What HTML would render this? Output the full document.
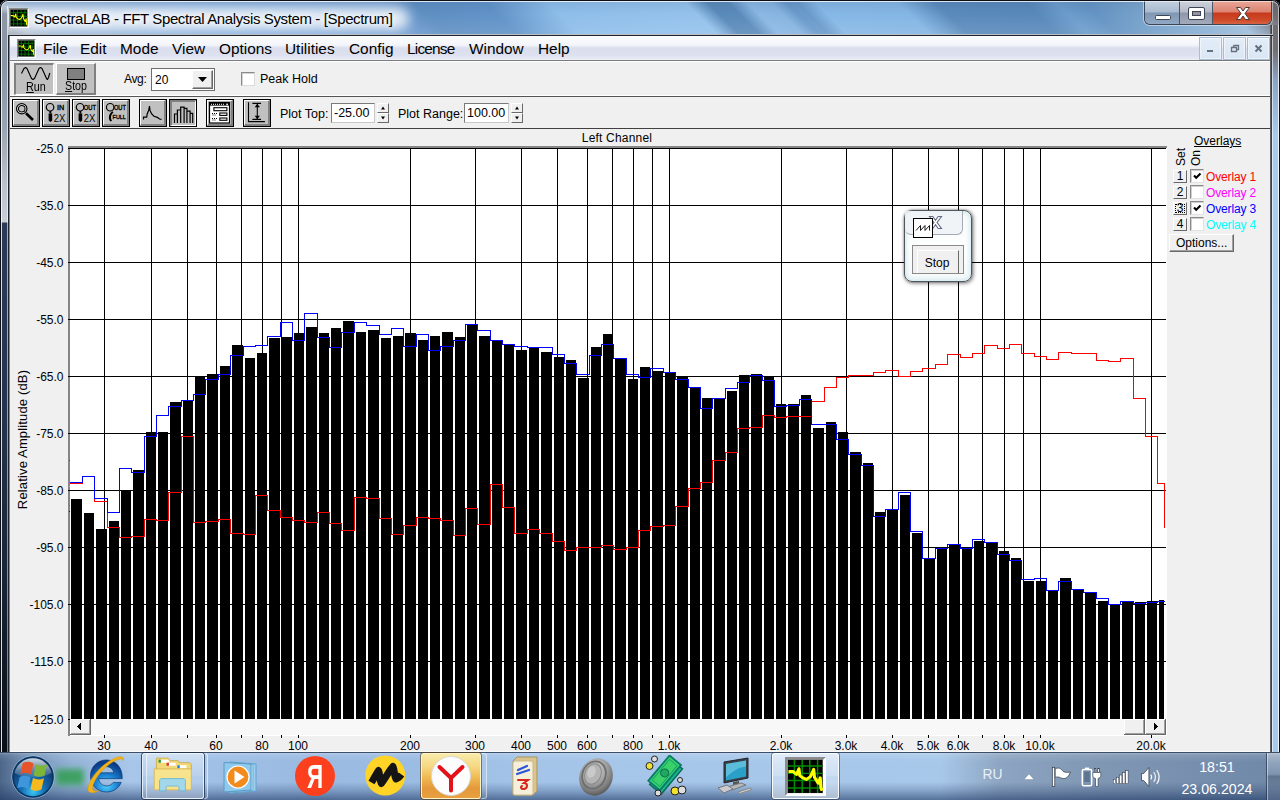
<!DOCTYPE html>
<html lang="en">
<head>
<meta charset="utf-8">
<title>SpectraLAB - FFT Spectral Analysis System - [Spectrum]</title>
<style>
*{box-sizing:border-box;margin:0;padding:0}
html,body{width:1280px;height:800px;overflow:hidden;background:#000}
body{position:relative;font-family:"Liberation Sans",sans-serif;font-size:12px;color:#000}
.abs{position:absolute}
#frame{position:absolute;left:0;top:0;width:1280px;height:752px;background:#7ea6d4;overflow:hidden;border-radius:8px 8px 0 0}
#frameedge{position:absolute;left:0;top:0;width:1280px;height:760px;border-radius:8px 8px 0 0;box-shadow:inset 0 0 0 1px #0c1016,inset 0 0 0 2px rgba(255,255,255,.55);pointer-events:none}
#titleglass{position:absolute;left:0;top:0;width:1280px;height:35px;
 background:linear-gradient(180deg,rgba(20,40,80,.10) 0,rgba(20,40,80,0) 14px,rgba(255,255,255,.10) 34px),linear-gradient(45deg,#8f9db0 12.7px,#a3b3c8 21.2px,#8badd4 41.0px,#7aa6d8 154.1px,#6d9bd0 292.0px,#5f8fc2 316.8px,#6193c8 366.3px,#8ebeea 410.8px,#94c2ec 507.7px,#5a8aba 523.3px,#5a8aba 537.4px,#8ab8e4 551.5px,#86b4e0 567.8px,#6a9acb 578.4px,#6a9acb 586.9px,#86b8e6 599.6px,#84b6e4 657.6px,#5a8abc 684.5px,#5888ba 748.1px,#6c9ccc 769.3px,#6494c4 790.5px,#7aa4cc 825.9px,#9dbddc 886.0px,#7c8594 905.1px,#6e6b71 914.3px)}
#tglow{position:absolute;left:-6px;top:7px;width:415px;height:23px;border-radius:12px;background:rgba(255,255,255,.8);filter:blur(6px)}
#titleglass:before{content:"";position:absolute;left:0;top:0;width:100%;height:1px;background:#1c222b}
#titleglass:after{content:"";position:absolute;left:1px;top:1px;width:1278px;height:1px;background:rgba(255,255,255,.55)}
#lframe{position:absolute;left:0;top:6px;width:8px;height:746px;background:linear-gradient(180deg,rgba(140,150,165,0) 0,#8d97a6 8px,#8a94a3 60px,#9aa3b0 120px,#bcc2cc 180px,#c9cdd6 216px,#2c3b55 217px,#25344e 400px,#1a2638 560px,#0e1620 680px,#0a1018 746px)}
#lframe2{position:absolute;left:8px;top:35px;width:2px;height:717px;background:linear-gradient(90deg,#1d2430 0,#1d2430 1px,#8a8a8a 1px)}
#lframe i{position:absolute;top:0;height:100%;width:1px}
#rframe{position:absolute;left:1270px;top:25px;width:10px;height:727px;background:linear-gradient(180deg,#6f6c72 0,#716f76 25px,#8aa4c6 55px,#a6c9ee 110px,#b0d2f4 400px,#a4c8ee 727px)}
#rframe i{position:absolute;top:0;height:100%;width:1px}
#title{position:absolute;left:34px;top:8.5px;font-size:15px;letter-spacing:-0.38px;line-height:20px;white-space:nowrap;color:#000;text-shadow:0 0 5px #fff,0 0 9px #fff}
#client{position:absolute;left:10px;top:35px;width:1260px;height:717px;background:#f0f0f0;border-bottom:1px solid #fcfcfc}
#topline{position:absolute;left:8px;top:34px;width:1265px;height:2px;background:#1f2630;border-top:1px solid rgba(255,255,255,.7);z-index:3}
#menubar{position:absolute;left:0;top:0;width:1260px;height:26px;background:linear-gradient(180deg,#fdfdfe 0,#f3f5fa 10px,#e4e7f2 12px,#dadeed 13px,#dde1ef 20px,#e8ebf5 24px,#f4f5fa 25px);border-bottom:1px solid #7b7b7b}
#menubar span{position:absolute;top:3px;font-size:15.4px;line-height:22px;white-space:nowrap}
.tbline{position:absolute;left:0;width:1260px;height:1px;background:#555}
.lbl{position:absolute;white-space:nowrap;font-size:12px;line-height:14px}
.btn3{position:absolute;background:#c0c0c0;border:1px solid #000}
.btn3:before{content:"";position:absolute;left:0;top:0;right:0;bottom:0;border-top:1px solid #fff;border-left:1px solid #fff;border-right:2px solid #808080;border-bottom:2px solid #808080}
.btn3.down:before{border-top:2px solid #808080;border-left:2px solid #808080;border-right:1px solid #fff;border-bottom:1px solid #fff}
.btn3 svg{position:absolute;left:0;top:0}
.edit{position:absolute;background:#fff;border:1px solid #7a7a7a;border-right-color:#c8c8c8;border-bottom-color:#c8c8c8;font-size:13px;line-height:17px;padding-left:2px;white-space:nowrap}
.spin{position:absolute;width:11px;height:10px;background:#f0f0f0;border:1px solid #fff;border-right-color:#696969;border-bottom-color:#696969}
#taskbar{position:absolute;left:0;top:752px;width:1280px;height:48px;overflow:hidden;
 background:linear-gradient(180deg,rgba(255,255,255,.28) 1px,rgba(255,255,255,.10) 3px,rgba(255,255,255,0) 10px,rgba(25,50,95,0) 30px,rgba(25,50,95,.22) 38px,rgba(25,50,95,.58) 48px),
 linear-gradient(90deg,#4c6688 0,#6f8cb0 25px,#93b2d6 70px,#a7c6e9 130px,#a1c1e7 200px,#9abae1 300px,#9bbce3 420px,#a3c3e8 520px,#a7c7ea 700px,#a8c8ea 940px,#8da5c2 1000px,#8097b4 1100px,#6f88a8 1280px)}
#taskbar:before{content:"";position:absolute;left:0;top:0;width:100%;height:1px;background:#3d4f68}
.tbi{position:absolute;top:1px;height:46px;border-radius:3px}
.tray{position:absolute;color:#fff;white-space:nowrap;font-size:15px}
</style>
</head>
<body>

<svg width="0" height="0" style="position:absolute">
<defs>
 <g id="appicon">
  <rect x="0" y="0" width="20" height="20" fill="#fff"/><path d="M0 0h20l-1.600 1.500h-17v17l-1.400 1.500z" fill="#8c8c8c"/>
  <rect x="1.400" y="1.500" width="17" height="17" fill="#000"/>
  <path d="M1.400 4.600h17M1.400 8.400h17M1.400 12.100h17M1.400 15.900h17M4.600 1.500v17M8.400 1.500v17M12.100 1.500v17M15.900 1.500v17" stroke="#008a00" stroke-width=".75" fill="none"/>
  <path d="M1.700 7.400h2.200l1.700 1.600 1.200-3 .4 3.500 1.500 1.200 1.800.8 1.900-1.400 1.600-3.800.4 4.100 1.800 3.100 1-2.800.3 5 .6 1.600" stroke="#ffff00" fill="none" stroke-linejoin="round"/>
 </g>
 <g id="mag"><circle cx="9" cy="10" r="5.500" fill="#fff" stroke="#000" stroke-width="1.100"/><circle cx="9" cy="10" r="3.800" fill="#c0c0c0" stroke="#000" stroke-width="1"/></g>
 <g id="magh"><circle cx="7.050" cy="7.250" r="3.750" fill="#c0c0c0" stroke="#000" stroke-width="1.200"/><path d="M6.400 11h1.900v2.600h-1.900z" fill="#000"/><path d="M5.600 13.400h3.600v7l-1.800 1.700-1.800-1.700z" fill="#000"/></g>
 <g id="magh2"><circle cx="7.200" cy="7.250" r="3.750" fill="#c0c0c0" stroke="#000" stroke-width="1.200"/><path d="M9.500 11.200c-2.500 1.500-3.600 3.500-3.600 6.200 0 1.800.6 3.200 1.600 4.200l1.500-.9c-.7-.9-1-2-1-3.300 0-2 .8-3.800 2.500-5z" fill="#000"/></g>
</defs>
</svg>

<div id="frame">
<div id="titleglass"><div id="tglow"></div></div>
<div id="lframe"><i style="left:0;background:#000"></i><i style="left:1px;background:linear-gradient(180deg,rgba(255,255,255,.6) 0,rgba(255,255,255,.7) 100%)"></i><i style="left:7px;background:linear-gradient(180deg,rgba(255,255,255,.65) 0,rgba(255,255,255,.6) 29%,rgba(255,255,255,.45) 100%)"></i></div><div id="lframe2"></div>
<div id="rframe"><i style="left:0;background:#5d6166"></i><i style="left:1px;background:#39414d"></i><i style="left:2px;background:rgba(255,255,255,.6)"></i><i style="left:8px;background:rgba(255,255,255,.6)"></i><i style="left:9px;background:#0c1016"></i></div>
<div id="topline"></div>
<svg class="abs" style="left:9px;top:8px;stroke-width:1.05" width="20" height="20" viewBox="0 0 20 20"><use href="#appicon"/></svg>
<div id="title">SpectraLAB - FFT Spectral Analysis System - [Spectrum]</div>
<!-- caption buttons -->
<div class="abs" style="left:1144px;top:1px;width:128px;height:24px;border:1px solid #3b4656;border-top:none;border-radius:0 0 6px 6px;overflow:hidden;box-shadow:0 0 0 1px rgba(255,255,255,.45)">
 <div class="abs" style="left:0;top:0;width:35px;height:23px;background:linear-gradient(180deg,#c3d0df 0,#a9bbd0 11px,#7f97b3 12px,#93aac5 24px);border-right:1px solid #4a5668"></div>
 <div class="abs" style="left:35px;top:0;width:33px;height:23px;background:linear-gradient(180deg,#cfd3dc 0,#b4b9c6 11px,#8f97a8 12px,#a5adbc 24px);border-right:1px solid #4a5668"></div>
 <div class="abs" style="left:68px;top:0;width:60px;height:23px;background:linear-gradient(180deg,#e9a798 0,#dc8270 11px,#c6391c 12px,#cf4a28 19px,#d86a4a 24px)"></div>
 <svg class="abs" style="left:0;top:0" width="128" height="24" viewBox="0 0 128 24">
  <rect x="10.5" y="14.5" width="15" height="4" rx="1" fill="#fff" stroke="#3c4558" stroke-width="1"/>
  <rect x="43.500" y="6.500" width="16" height="12" rx="1.500" fill="#fff" stroke="#3c4558"/><rect x="47.500" y="10.500" width="8" height="4" fill="#9a8f9c" stroke="#3c4558"/>
  <path d="M91.500 6.500h4l2.500 3.500 2.500-3.500h4l-4.500 6 4.500 6h-4l-2.500-3.500-2.500 3.500h-4l4.500-6z" fill="#fff" stroke="#4a3a3a" stroke-width="1" stroke-linejoin="round"/>
 </svg>
</div>
<div id="client">

<div id="menubar">
 <svg class="abs" style="left:7px;top:4px;stroke-width:1.05" width="19" height="19" viewBox="0 0 20 20"><use href="#appicon"/></svg>
 <span style="left:33px">File</span><span style="left:70px">Edit</span><span style="left:110px">Mode</span><span style="left:162px">View</span><span style="left:209px">Options</span><span style="left:275px">Utilities</span><span style="left:339px">Config</span><span style="left:397px;letter-spacing:-0.8px">License</span><span style="left:459px">Window</span><span style="left:528px">Help</span>
 <div class="abs mdi" style="left:1189px"></div><div class="abs mdi" style="left:1213px"></div><div class="abs mdi" style="left:1237px"></div>
 <svg class="abs" style="left:1189px;top:2px" width="71" height="22" viewBox="0 0 71 22">
  <rect x="8" y="13" width="6" height="2" fill="#66707e"/>
  <path d="M34.500 8.500h5v4h-2m-3-2v-2M32.500 10.500h5v4h-5z" fill="none" stroke="#66707e" stroke-width="1.300"/>
  <path d="M56.500 8.500l6 6m0-6l-6 6" stroke="#66707e" stroke-width="2" fill="none"/>
 </svg>
</div>
<style>.mdi{top:2px;width:23px;height:23px;background:linear-gradient(180deg,#e3edf8,#d9e6f4);border:1px solid #a9bdd3;box-shadow:inset 0 0 0 1px rgba(255,255,255,.5)}</style>

<!-- toolbar row 1: page y 61..95 ; client offset (10,35) -->
<div class="abs" style="left:0;top:26px;width:1260px;height:1px;background:#fff"></div>
<div class="abs" style="left:4px;top:28px;width:40px;height:32px;background:#c0c0c0;border:2px solid #808080;border-right:1px solid #fff;border-bottom:1px solid #fff" id="runbtn">
 <svg class="abs" style="left:-2px;top:-2px" width="40" height="32" viewBox="14 63 40 32"><path d="M21.500 73.500 L24 68.500 L25.500 67.500 L27 68.500 L31.500 78.500 L33 79.500 L34.500 78.500 L39 68.500 L40.500 67.500 L42 68.500 L46.500 78.500 L47.500 79.500 L48.500 77.500 L49.800 73" fill="none" stroke="#000" stroke-width="1.150" stroke-linejoin="round"/></svg>
 <span class="lbl" style="left:9.500px;top:15px;font-size:12px;transform:scaleX(.9);transform-origin:0 0"><u>R</u>un</span>
</div>
<div class="abs" style="left:46px;top:28px;width:40px;height:32px;background:#c0c0c0;border:1px solid #fff;border-right:2px solid #808080;border-bottom:2px solid #808080" id="stopbtn">
 <div class="abs" style="left:10px;top:4px;width:18px;height:12px;background:#808080;border:1px solid #000"></div>
 <span class="lbl" style="left:7.500px;top:15px;font-size:12px;transform:scaleX(.89);transform-origin:0 0"><u>S</u>top</span>
</div>
<span class="lbl" style="left:114px;top:37px;letter-spacing:-0.35px">Avg:</span>
<div class="abs" style="left:141px;top:33px;width:64px;height:23px;background:#fff;border:1px solid #6e6e6e">
 <span class="lbl" style="left:3px;top:4px;font-size:12px;line-height:14px">20</span>
 <div class="abs" style="left:40px;top:1px;width:21px;height:19px;background:#f0f0f0;border:1px solid #fff;border-right-color:#696969;border-bottom-color:#696969;box-shadow:inset -1px -1px 0 #a0a0a0"><svg class="abs" style="left:5px;top:6px" width="9" height="5"><path d="M0 0h9l-4.500 5z" fill="#000"/></svg></div>
</div>
<div class="abs" style="left:231px;top:37px;width:14px;height:14px;background:#fff;border:1px solid #8a8a8a;border-right-color:#dcdcdc;border-bottom-color:#dcdcdc;box-shadow:inset 1px 1px 0 #d4d4d4"></div>
<span class="lbl" style="left:250px;top:37px;font-size:12.500px">Peak Hold</span>
<div class="tbline" style="top:60px;background:#fff"></div>
<div class="tbline" style="top:61px"></div>
<!-- toolbar row 2: page y 99..127 ; svg origin inside each button = button left+1, 100 -->
<div class="btn3" style="left:2px;top:64px;width:28px;height:28px"><svg width="26" height="26" viewBox="0 0 26 26"><circle cx="8.750" cy="8.750" r="5.200" fill="#fff" stroke="#000" stroke-width="1.200"/><circle cx="8.750" cy="8.750" r="3.300" fill="#c0c0c0" stroke="#000" stroke-width="1.100"/><path d="M13 13.200l7 6.800" stroke="#000" stroke-width="2.600" fill="none"/></svg></div>
<div class="btn3" style="left:32px;top:64px;width:28px;height:28px"><svg width="26" height="26" viewBox="0 0 26 26"><use href="#magh"/><text x="13.900" y="9.600" font-size="6.500" font-weight="normal" stroke="#000" stroke-width=".35" font-family="'Liberation Sans',sans-serif" textLength="7.200" lengthAdjust="spacingAndGlyphs">IN</text><text x="10.700" y="21.500" font-size="11" font-family="'Liberation Sans',sans-serif" textLength="11.600" lengthAdjust="spacingAndGlyphs">2X</text></svg></div>
<div class="btn3" style="left:62px;top:64px;width:28px;height:28px"><svg width="26" height="26" viewBox="0 0 26 26"><use href="#magh"/><text x="10.700" y="9.700" font-size="6.500" font-weight="normal" stroke="#000" stroke-width=".35" font-family="'Liberation Sans',sans-serif" textLength="12.300" lengthAdjust="spacingAndGlyphs">OUT</text><text x="10.700" y="21.500" font-size="11" font-family="'Liberation Sans',sans-serif" textLength="11.600" lengthAdjust="spacingAndGlyphs">2X</text></svg></div>
<div class="btn3" style="left:92px;top:64px;width:28px;height:28px"><svg width="26" height="26" viewBox="0 0 26 26"><use href="#magh2"/><text x="10.900" y="9.700" font-size="6.500" font-weight="normal" stroke="#000" stroke-width=".35" font-family="'Liberation Sans',sans-serif" textLength="12" lengthAdjust="spacingAndGlyphs">OUT</text><text x="9.600" y="18.600" font-size="6" font-weight="normal" stroke="#000" stroke-width=".35" font-family="'Liberation Sans',sans-serif" textLength="13.300" lengthAdjust="spacingAndGlyphs">FULL</text></svg></div>
<div class="btn3" style="left:129px;top:64px;width:28px;height:28px"><svg width="26" height="26" viewBox="0 0 26 26"><path d="M3.500 19.600v-2.500h3.200l.5-3.100 1.400-3.400.9-4.500.5 4.500 1.700 3.400 2.300 2.200 3.400 1.200 2.200 1.600 2 .4" fill="none" stroke="#000" stroke-width="1.200"/></svg></div>
<div class="btn3 down" style="left:159px;top:64px;width:28px;height:28px"><svg width="26" height="26" viewBox="0 0 26 26"><path d="M4.500 23v-9h2.900v9m0-9v-4h3.300v13m0-13v-2.800h3.400v15.800m0-14.600h2.800v14.600m0-11.800h3.200v11.800m0-9.600h2.600v9.600" fill="none" stroke="#000" stroke-width="1.200"/></svg></div>
<div class="btn3" style="left:196px;top:64px;width:28px;height:28px"><svg width="26" height="26" viewBox="0 0 26 26"><rect x="2.500" y="2.500" width="20" height="20.500" fill="#fff" stroke="#000" stroke-width="1.200"/><rect x="3" y="3" width="19" height="2.600" fill="#000"/><path d="M4 4.300h14" stroke="#fff" stroke-width="1" stroke-dasharray="1 1"/><rect x="19.300" y="3.600" width="1.600" height="1.500" fill="#fff"/><rect x="6.900" y="7.700" width="13" height="3" fill="#fff" stroke="#000" stroke-width="1.100"/><rect x="12.800" y="13" width="7.100" height="2.400" fill="#fff" stroke="#000" stroke-width="1.100"/><rect x="12.800" y="18" width="7.100" height="2.300" fill="#fff" stroke="#000" stroke-width="1.100"/><path d="M5 13.500h5M5.500 15h4M5 18.500h5M5.500 20h4" stroke="#000" stroke-dasharray="1 1"/></svg></div>
<div class="btn3" style="left:233px;top:64px;width:28px;height:28px"><svg width="26" height="26" viewBox="0 0 26 26"><path d="M4.500 2.200v19.400h16.400" fill="none" stroke="#000" stroke-width="1.100"/><path d="M8.400 3.400h8.600M8.400 19.400h8.600M13.300 4v15" stroke="#000" stroke-width="1.100" fill="none"/><path d="M13.300 3.900l-2.700 3.300h5.400zM13.300 19l-2.700-3.300h5.400z" fill="#000"/></svg></div>
<span class="lbl" style="left:270px;top:72px;font-size:12.500px">Plot Top:</span>
<div class="edit" style="left:321px;top:68px;width:44px;height:20px;font-size:12.500px;line-height:18px">-25.00</div>
<div class="spin" style="left:367px;top:68px;width:12px"></div><div class="spin" style="left:367px;top:78px;width:12px"></div>
<span class="lbl" style="left:388px;top:72px;font-size:12.500px">Plot Range:</span>
<div class="edit" style="left:454px;top:68px;width:45px;height:20px;font-size:12.500px;line-height:18px">100.00</div>
<div class="spin" style="left:501px;top:68px;width:12px"></div><div class="spin" style="left:501px;top:78px;width:12px"></div>
<svg class="abs" style="left:367px;top:68px" width="150" height="20"><path d="M4 6.500l2-3 2 3zM4 13.500l2 3 2-3zM138 6.500l2-3 2 3zM138 13.500l2 3 2-3z" fill="#000"/></svg>
<div class="tbline" style="top:93px;background:#404040"></div>

<div class="abs" style="left:-10px;top:-35px;width:1280px;height:800px;pointer-events:none"><svg class="plot" style="position:absolute;left:0;top:130px" width="1280" height="622" viewBox="0 130 1280 622" font-family="'Liberation Sans', sans-serif" font-size="12">
<g shape-rendering="crispEdges">
<rect x="68" y="146" width="1099" height="590" fill="#fff"/>
<rect x="68" y="146" width="1099" height="2" fill="#868686"/>
<rect x="68" y="146" width="2" height="590" fill="#868686"/>
<rect x="68" y="148" width="1098" height="1" fill="#000"/>
<rect x="68" y="205" width="1098" height="1" fill="#000"/>
<rect x="68" y="262" width="1098" height="1" fill="#000"/>
<rect x="68" y="319" width="1098" height="1" fill="#000"/>
<rect x="68" y="376" width="1098" height="1" fill="#000"/>
<rect x="68" y="433" width="1098" height="1" fill="#000"/>
<rect x="68" y="490" width="1098" height="1" fill="#000"/>
<rect x="68" y="547" width="1098" height="1" fill="#000"/>
<rect x="68" y="604" width="1098" height="1" fill="#000"/>
<rect x="68" y="661" width="1098" height="1" fill="#000"/>
<rect x="68" y="719" width="1098" height="1" fill="#000"/>
<rect x="104" y="148" width="1" height="571" fill="#000"/>
<rect x="151" y="148" width="1" height="571" fill="#000"/>
<rect x="187" y="148" width="1" height="571" fill="#000"/>
<rect x="216" y="148" width="1" height="571" fill="#000"/>
<rect x="241" y="148" width="1" height="571" fill="#000"/>
<rect x="262" y="148" width="1" height="571" fill="#000"/>
<rect x="281" y="148" width="1" height="571" fill="#000"/>
<rect x="298" y="148" width="1" height="571" fill="#000"/>
<rect x="410" y="148" width="1" height="571" fill="#000"/>
<rect x="475" y="148" width="1" height="571" fill="#000"/>
<rect x="521" y="148" width="1" height="571" fill="#000"/>
<rect x="557" y="148" width="1" height="571" fill="#000"/>
<rect x="587" y="148" width="1" height="571" fill="#000"/>
<rect x="612" y="148" width="1" height="571" fill="#000"/>
<rect x="633" y="148" width="1" height="571" fill="#000"/>
<rect x="652" y="148" width="1" height="571" fill="#000"/>
<rect x="669" y="148" width="1" height="571" fill="#000"/>
<rect x="781" y="148" width="1" height="571" fill="#000"/>
<rect x="846" y="148" width="1" height="571" fill="#000"/>
<rect x="892" y="148" width="1" height="571" fill="#000"/>
<rect x="928" y="148" width="1" height="571" fill="#000"/>
<rect x="958" y="148" width="1" height="571" fill="#000"/>
<rect x="982" y="148" width="1" height="571" fill="#000"/>
<rect x="1004" y="148" width="1" height="571" fill="#000"/>
<rect x="1023" y="148" width="1" height="571" fill="#000"/>
<rect x="1040" y="148" width="1" height="571" fill="#000"/>
<rect x="1151" y="148" width="1" height="571" fill="#000"/>
<path d="M71 499H82V719H71ZM84 513H94V719H84ZM96 529H107V719H96ZM109 521H119V719H109ZM121 490H131V719H121ZM133 470H144V719H133ZM146 432H156V719H146ZM158 432H168V719H158ZM170 402H181V719H170ZM183 400H193V719H183ZM195 376H205V719H195ZM207 374H218V719H207ZM220 366H230V719H220ZM232 345H243V719H232ZM245 358H255V719H245ZM257 353H267V719H257ZM269 338H280V719H269ZM282 337H292V719H282ZM294 333H304V719H294ZM306 327H317V719H306ZM319 333H329V719H319ZM331 328H341V719H331ZM343 321H354V719H343ZM356 332H366V719H356ZM368 330H379V719H368ZM381 338H391V719H381ZM393 336H403V719H393ZM405 333H416V719H405ZM418 340H428V719H418ZM430 336H440V719H430ZM442 332H453V719H442ZM455 337H465V719H455ZM467 324H477V719H467ZM479 336H490V719H479ZM492 341H502V719H492ZM504 345H514V719H504ZM516 350H527V719H516ZM529 348H539V719H529ZM541 352H552V719H541ZM554 357H564V719H554ZM566 360H576V719H566ZM578 378H589V719H578ZM591 347H601V719H591ZM603 334H613V719H603ZM615 359H626V719H615ZM628 379H638V719H628ZM640 367H650V719H640ZM652 371H663V719H652ZM665 373H675V719H665ZM677 376H688V719H677ZM690 387H700V719H690ZM702 398H712V719H702ZM714 399H725V719H714ZM727 391H737V719H727ZM739 375H749V719H739ZM751 374H762V719H751ZM764 376H774V719H764ZM776 404H786V719H776ZM788 404H799V719H788ZM801 395H811V719H801ZM813 428H824V719H813ZM826 422H836V719H826ZM838 432H848V719H838ZM850 452H861V719H850ZM863 463H873V719H863ZM875 512H885V719H875ZM887 510H898V719H887ZM900 495H910V719H900ZM912 533H922V719H912ZM924 559H935V719H924ZM937 548H947V719H937ZM949 544H960V719H949ZM962 549H972V719H962ZM974 541H984V719H974ZM986 543H997V719H986ZM999 551H1009V719H999ZM1011 558H1021V719H1011ZM1023 581H1034V719H1023ZM1036 581H1046V719H1036ZM1048 591H1058V719H1048ZM1060 578H1071V719H1060ZM1073 590H1083V719H1073ZM1085 593H1096V719H1085ZM1098 601H1108V719H1098ZM1110 605H1120V719H1110ZM1122 602H1133V719H1122ZM1135 602H1145V719H1135ZM1147 601H1157V719H1147ZM1159 600H1164V719H1159Z" fill="#000"/>
<path d="M69.5 483.5H82.5V476.5H94.5V501.5H107.5V527.5H119.5V537.5H131.5V536.5H144.5V519.5H156.5V520.5H168.5V492.5H181.5V436.5H193.5V522.5H205.5V521.5H218.5V519.5H230.5V533.5H243.5V534.5H255.5V495.5H267.5V510.5H280.5V517.5H292.5V520.5H304.5V522.5H317.5V512.5H329.5V523.5H341.5V530.5H354.5V497.5H366.5V498.5H379.5V518.5H391.5V534.5H403.5V525.5H416.5V517.5H428.5V518.5H440.5V520.5H453.5V535.5H465.5V508.5H477.5V524.5H490.5V484.5H502.5V507.5H514.5V533.5H527.5V529.5H539.5V533.5H552.5V541.5H564.5V550.5H576.5V547.5H589.5V547.5H601.5V545.5H613.5V549.5H626.5V547.5H638.5V530.5H650.5V526.5H663.5V525.5H675.5V506.5H688.5V488.5H700.5V482.5H712.5V460.5H725.5V452.5H737.5V428.5H749.5V427.5H762.5V415.5H774.5V417.5H786.5V416.5H799.5V416.5H811.5V401.5H824.5V387.5H836.5V377.5H848.5V375.5H861.5V375.5H873.5V372.5H885.5V370.5H898.5V376.5H910.5V371.5H922.5V368.5H935.5V364.5H947.5V354.5H960.5V357.5H972.5V353.5H984.5V345.5H997.5V348.5H1009.5V344.5H1021.5V353.5H1034.5V356.5H1046.5V359.5H1058.5V352.5H1071.5V353.5H1083.5V353.5H1096.5V360.5H1108.5V361.5H1120.5V358.5H1133.5V398.5H1145.5V436.5H1157.5V483.5H1164.5V527.5" fill="none" stroke="#ff0000" stroke-width="1"/>
<path d="M69.5 482.5H82.5V476.5H94.5V498.5H107.5V512.5H119.5V468.5H131.5V472.5H144.5V436.5H156.5V415.5H168.5V406.5H181.5V400.5H193.5V394.5H205.5V379.5H218.5V374.5H230.5V355.5H243.5V346.5H255.5V345.5H267.5V336.5H280.5V322.5H292.5V340.5H304.5V313.5H317.5V337.5H329.5V347.5H341.5V332.5H354.5V322.5H366.5V325.5H379.5V334.5H391.5V328.5H403.5V346.5H416.5V334.5H428.5V350.5H440.5V346.5H453.5V340.5H465.5V324.5H477.5V330.5H490.5V340.5H502.5V344.5H514.5V346.5H527.5V347.5H539.5V347.5H552.5V354.5H564.5V363.5H576.5V374.5H589.5V355.5H601.5V344.5H613.5V358.5H626.5V374.5H638.5V377.5H650.5V368.5H663.5V372.5H675.5V379.5H688.5V387.5H700.5V408.5H712.5V398.5H725.5V388.5H737.5V382.5H749.5V375.5H762.5V380.5H774.5V406.5H786.5V405.5H799.5V399.5H811.5V424.5H824.5V424.5H836.5V439.5H848.5V454.5H861.5V465.5H873.5V516.5H885.5V509.5H898.5V492.5H910.5V531.5H922.5V558.5H935.5V548.5H947.5V544.5H960.5V548.5H972.5V539.5H984.5V542.5H997.5V554.5H1009.5V560.5H1021.5V579.5H1034.5V578.5H1046.5V590.5H1058.5V581.5H1071.5V589.5H1083.5V592.5H1096.5V598.5H1108.5V604.5H1120.5V601.5H1133.5V603.5H1145.5V602.5H1157.5V601.5H1164.5" fill="none" stroke="#0000ff" stroke-width="1"/>
<rect x="69" y="460" width="1" height="1" fill="#f00"/><rect x="69" y="486" width="1" height="1" fill="#0ff"/><rect x="69" y="505" width="1" height="1" fill="#f0f"/><rect x="69" y="511" width="1" height="1" fill="#00f"/>
<rect x="70" y="719" width="1096" height="16" fill="#f8f8f8"/>
<rect x="70" y="719" width="21" height="16" fill="#f0f0f0"/><rect x="70" y="719" width="21" height="1" fill="#fff"/><rect x="70" y="719" width="1" height="16" fill="#fff"/><rect x="70" y="734" width="21" height="1" fill="#696969"/><rect x="90" y="719" width="1" height="16" fill="#696969"/><rect x="71" y="733" width="19" height="1" fill="#a0a0a0"/><rect x="89" y="720" width="1" height="14" fill="#a0a0a0"/>
<rect x="1124" y="719" width="21" height="16" fill="#f0f0f0"/><rect x="1124" y="719" width="21" height="1" fill="#fff"/><rect x="1124" y="719" width="1" height="16" fill="#fff"/><rect x="1124" y="734" width="21" height="1" fill="#696969"/><rect x="1144" y="719" width="1" height="16" fill="#696969"/><rect x="1125" y="733" width="19" height="1" fill="#a0a0a0"/><rect x="1143" y="720" width="1" height="14" fill="#a0a0a0"/>
<rect x="1145" y="719" width="21" height="16" fill="#f0f0f0"/><rect x="1145" y="719" width="21" height="1" fill="#fff"/><rect x="1145" y="719" width="1" height="16" fill="#fff"/><rect x="1145" y="734" width="21" height="1" fill="#696969"/><rect x="1165" y="719" width="1" height="16" fill="#696969"/><rect x="1146" y="733" width="19" height="1" fill="#a0a0a0"/><rect x="1164" y="720" width="1" height="14" fill="#a0a0a0"/>
<path d="M81 723v7l-4-3.500z M1154 723v7l4-3.500z" fill="#000"/>
<rect x="104" y="735" width="1" height="3" fill="#000"/>
<rect x="151" y="735" width="1" height="3" fill="#000"/>
<rect x="187" y="735" width="1" height="3" fill="#000"/>
<rect x="216" y="735" width="1" height="3" fill="#000"/>
<rect x="241" y="735" width="1" height="3" fill="#000"/>
<rect x="262" y="735" width="1" height="3" fill="#000"/>
<rect x="281" y="735" width="1" height="3" fill="#000"/>
<rect x="298" y="735" width="1" height="3" fill="#000"/>
<rect x="410" y="735" width="1" height="3" fill="#000"/>
<rect x="475" y="735" width="1" height="3" fill="#000"/>
<rect x="521" y="735" width="1" height="3" fill="#000"/>
<rect x="557" y="735" width="1" height="3" fill="#000"/>
<rect x="587" y="735" width="1" height="3" fill="#000"/>
<rect x="612" y="735" width="1" height="3" fill="#000"/>
<rect x="633" y="735" width="1" height="3" fill="#000"/>
<rect x="652" y="735" width="1" height="3" fill="#000"/>
<rect x="669" y="735" width="1" height="3" fill="#000"/>
<rect x="781" y="735" width="1" height="3" fill="#000"/>
<rect x="846" y="735" width="1" height="3" fill="#000"/>
<rect x="892" y="735" width="1" height="3" fill="#000"/>
<rect x="928" y="735" width="1" height="3" fill="#000"/>
<rect x="958" y="735" width="1" height="3" fill="#000"/>
<rect x="982" y="735" width="1" height="3" fill="#000"/>
<rect x="1004" y="735" width="1" height="3" fill="#000"/>
<rect x="1023" y="735" width="1" height="3" fill="#000"/>
<rect x="1040" y="735" width="1" height="3" fill="#000"/>
<rect x="1151" y="735" width="1" height="3" fill="#000"/>
</g>
<text x="104" y="750" text-anchor="middle">30</text>
<text x="151" y="750" text-anchor="middle">40</text>
<text x="216" y="750" text-anchor="middle">60</text>
<text x="262" y="750" text-anchor="middle">80</text>
<text x="298" y="750" text-anchor="middle">100</text>
<text x="410" y="750" text-anchor="middle">200</text>
<text x="475" y="750" text-anchor="middle">300</text>
<text x="521" y="750" text-anchor="middle">400</text>
<text x="557" y="750" text-anchor="middle">500</text>
<text x="587" y="750" text-anchor="middle">600</text>
<text x="633" y="750" text-anchor="middle">800</text>
<text x="669" y="750" text-anchor="middle">1.0k</text>
<text x="781" y="750" text-anchor="middle">2.0k</text>
<text x="846" y="750" text-anchor="middle">3.0k</text>
<text x="892" y="750" text-anchor="middle">4.0k</text>
<text x="928" y="750" text-anchor="middle">5.0k</text>
<text x="958" y="750" text-anchor="middle">6.0k</text>
<text x="1004" y="750" text-anchor="middle">8.0k</text>
<text x="1040" y="750" text-anchor="middle">10.0k</text>
<text x="1151" y="750" text-anchor="middle">20.0k</text>
<text x="63.5" y="153" text-anchor="end">-25.0</text>
<text x="63.5" y="210" text-anchor="end">-35.0</text>
<text x="63.5" y="267" text-anchor="end">-45.0</text>
<text x="63.5" y="324" text-anchor="end">-55.0</text>
<text x="63.5" y="381" text-anchor="end">-65.0</text>
<text x="63.5" y="438" text-anchor="end">-75.0</text>
<text x="63.5" y="495" text-anchor="end">-85.0</text>
<text x="63.5" y="552" text-anchor="end">-95.0</text>
<text x="63.5" y="609" text-anchor="end">-105.0</text>
<text x="63.5" y="666" text-anchor="end">-115.0</text>
<text x="63.5" y="724" text-anchor="end">-125.0</text>
<text x="617" y="141.5" text-anchor="middle" letter-spacing=".2">Left Channel</text>
<text transform="translate(27 439.5) rotate(-90)" text-anchor="middle" font-size="13" letter-spacing=".15">Relative Amplitude (dB)</text>
</svg></div>
<!-- overlays panel (page coords minus (10,35)) -->
<span class="lbl" style="left:1184px;top:99px;text-decoration:underline">Overlays</span>
<span class="lbl" style="left:1164px;top:131px;transform-origin:0 0;transform:rotate(-90deg);font-size:12px;width:20px">Set</span>
<span class="lbl" style="left:1179px;top:131px;transform-origin:0 0;transform:rotate(-90deg);font-size:12px;width:20px">On</span>
<style>
.ob{position:absolute;left:1163px;width:14px;height:13px;background:#f0f0f0;border:1px solid #fff;border-right-color:#696969;border-bottom-color:#696969;font-size:12px;line-height:11px;text-align:center}
.oc{position:absolute;left:1180px;width:14px;height:14px;background:#fff;border:1px solid #8a8a8a;border-right-color:#e3e3e3;border-bottom-color:#e3e3e3;box-shadow:inset 1px 1px 0 #cfcfcf}
.ol{position:absolute;left:1196px;letter-spacing:-0.15px;font-size:12px;line-height:14px;white-space:nowrap}
</style>
<div class="ob" style="top:135px">1</div><div class="oc" style="top:134px"><svg width="12" height="12"><path d="M3 5.500l2.200 2.300 4.300-4.300" stroke="#000" stroke-width="2.100" fill="none"/></svg></div><span class="ol" style="top:135px;color:#f00">Overlay 1</span>
<div class="ob" style="top:151px">2</div><div class="oc" style="top:150px"></div><span class="ol" style="top:151px;color:#f0f">Overlay 2</span>
<div class="ob" style="top:167px;outline:1px dotted #000;outline-offset:-3px">3</div><div class="oc" style="top:166px"><svg width="12" height="12"><path d="M3 5.500l2.200 2.300 4.300-4.300" stroke="#000" stroke-width="2.100" fill="none"/></svg></div><span class="ol" style="top:167px;color:#00f">Overlay 3</span>
<div class="ob" style="top:183px">4</div><div class="oc" style="top:182px"></div><span class="ol" style="top:183px;color:#0ff">Overlay 4</span>
<div class="abs" style="left:1159px;top:199px;width:65px;height:18px;background:#f0f0f0;border:1px solid #fff;border-right-color:#696969;border-bottom-color:#696969;box-shadow:inset -1px -1px 0 #a0a0a0;font-size:12px;line-height:16px;padding-left:6px">Options...</div>

<!-- floating mini window: page (904.5..971.5, 210..281.5) -->
<div class="abs" style="left:894px;top:175px;width:68px;height:72px;border-radius:8px;background:linear-gradient(180deg,#f7f9fa,#fdfefe 50%,#f6f9fa);border:1px solid #52565a;box-shadow:1px 1px 4px rgba(0,0,0,.55),0 0 2px rgba(0,0,0,.4), inset 0 0 4px 1px rgba(185,225,236,.75)">
 <div class="abs" style="left:0;top:0;width:58px;height:24px;border:1px solid #a3abb4;border-top:none;border-left:none;border-radius:0 0 6px 6px;background:rgba(238,242,246,.85)"></div>
 <svg class="abs" style="left:22px;top:4px" width="18" height="16"><path d="M2.500 1.500h3.300l2.700 3.800 2.700-3.800h3.300l-4.400 6 4.400 6h-3.300l-2.700-3.800-2.700 3.800h-3.300l4.400-6z" fill="#fff" stroke="#626a86" stroke-width="1.100"/></svg>
 <div class="abs" style="left:8px;top:7px;width:20px;height:20px;background:#fff;border:1px solid #000"><svg width="18" height="18"><path d="M2 11.500l4.500-5v5l4.500-5v5l4.500-5v5" stroke="#000" stroke-width=".9" fill="none"/></svg></div>
 <div class="abs" style="left:7px;top:34px;width:52px;height:29px;border:1px solid #8a8a8a;background:#f0f0f0"></div>
 <div class="abs" style="left:12px;top:39px;width:42px;height:23px;background:#f0f0f0;border-top:1px solid #fff;border-left:1px solid #fff;border-right:1px solid #696969;font-size:12px;line-height:24px;text-align:center;padding-right:2px">Stop</div>
</div>
</div><!-- /client -->
<div id="frameedge"></div>
</div><!-- /frame -->

<div id="taskbar">
 <!-- green blurred thing -->
 <div class="abs" style="left:56px;top:17px;width:28px;height:16px;background:#2f9e4d;filter:blur(3px);opacity:.85"></div>
 <!-- start orb -->
 <svg class="abs" style="left:10px;top:2px" width="46" height="46" viewBox="0 0 46 46">
  <defs><radialGradient id="orb" cx="50%" cy="85%" r="75%"><stop offset="0" stop-color="#39c5f5"/><stop offset=".35" stop-color="#1672b5"/><stop offset=".8" stop-color="#0f3f77"/><stop offset="1" stop-color="#27527f"/></radialGradient>
  <linearGradient id="orbhi" x1="0" y1="0" x2="0" y2="1"><stop offset="0" stop-color="#fff" stop-opacity=".75"/><stop offset="1" stop-color="#fff" stop-opacity=".1"/></linearGradient></defs>
  <circle cx="23" cy="23" r="21" fill="url(#orb)" stroke="#cfe3f5" stroke-width="1" stroke-opacity=".7"/>
  <circle cx="23" cy="23" r="20" fill="none" stroke="#0b3463" stroke-width="1.500"/>
  <path d="M4.500 19a19 19 0 0 1 37 0c-10 6-27 6-37 0z" fill="url(#orbhi)"/>
  <g transform="translate(23.300 22.300) scale(1.200) translate(-22.300 -21.500)"><path d="M13.500 10.500c3-1.500 6-1.500 9 .3l-2 9.200c-3-1.700-6-1.800-9-.3z" fill="#e8542a"/>
  <path d="M24.500 11.500c3 1.600 6 1.600 9.300 0l-2.100 9.300c-3.200 1.500-6.200 1.400-9.200-.2z" fill="#7fb539"/>
  <path d="M11 22c3-1.500 6-1.400 9 .3l-2.100 9.400c-3-1.700-6-1.800-9-.3z" fill="#3f96dc"/>
  <path d="M22 23c3 1.600 6 1.700 9.200.1l-2.100 9.400c-3.200 1.600-6.200 1.500-9.200-.2z" fill="#f6b91e"/></g>
 </svg>
 <!-- IE -->
 <svg class="abs" style="left:83px;top:2px" width="47" height="45" viewBox="0 0 44 42">
  <defs><radialGradient id="ieg" cx="50%" cy="80%" r="70%"><stop offset="0" stop-color="#4fd0ff"/><stop offset=".5" stop-color="#1a7fd0"/><stop offset="1" stop-color="#0b3d86"/></radialGradient></defs>
  <path d="M22 5.500c-8.500 0-15 6.500-15 15s6.500 15 15 15c6.300 0 11.500-3.400 13.800-9h-7.500c-1.200 2-3.400 3.300-6.200 3.300-4 0-7-2.700-7.400-6.800h22c.6-9.800-5.800-17.500-14.700-17.500zm-7.100 12c.7-3.400 3.400-5.700 7-5.700s6.300 2.200 6.900 5.700z" fill="url(#ieg)" stroke="#0a3270" stroke-width=".6"/>
  <path d="M37.500 6c1.500-3.200-1.500-4.800-7.500-2.300C20 8 9 19 5.500 28.500c-3 8 2 9.500 9.500 5.500-5 1.500-7.500.2-5.500-5.500C12.500 20 22 10 30.500 6c4.500-2 7.500-2 7 0z" fill="#f4b21a" stroke="#d99a10" stroke-width=".5"/>
 </svg>
 <!-- explorer button -->
 <div class="tbi" style="left:146px;width:62px;border:1px solid rgba(255,255,255,.55);background:rgba(255,255,255,.12)"></div>
 <div class="tbi" style="left:142px;width:62px;border:1px solid rgba(235,245,255,.85);background:linear-gradient(180deg,rgba(255,255,255,.38),rgba(255,255,255,.16) 50%,rgba(255,255,255,.06) 52%,rgba(255,255,255,.22));box-shadow:0 0 0 1px rgba(30,45,70,.8)"></div>
 <svg class="abs" style="left:151px;top:2px" width="43" height="41" viewBox="0 0 40 40" preserveAspectRatio="none">
  <path d="M5 4h11l2 2.500h7l2 2h9l1.500 1.500v6H5z" fill="#f3d877" stroke="#c9a848" stroke-width=".8"/>
  <path d="M8.500 5.500h8v3h-8zM15 8.500h8v3h-8zM24 11h9v3h-9z" fill="#fff"/><rect x="7" y="5.500" width="2.200" height="3" fill="#2a9a3a"/><rect x="14.500" y="8.500" width="2.200" height="3" fill="#d33"/><rect x="24.500" y="11" width="2.200" height="3" fill="#27c"/>
  <path d="M3 14.500h34.500v19.500l-1 1H4l-1-1z" fill="#f7e28e" stroke="#d6b453" stroke-width=".8"/>
  <path d="M8 26c0-1 .8-2 2-2h20c1.200 0 2 1 2 2v10H26v-3.500c0-.8-.5-1.200-1.200-1.200h-9.600c-.7 0-1.200.4-1.200 1.200V36H8z" fill="#9fd8f0" stroke="#5fb0d8" stroke-width=".8" opacity=".95"/>
 </svg>
 <!-- WMP -->
 <svg class="abs" style="left:222px;top:8px" width="38" height="34" viewBox="0 0 38 34">
  <path d="M8 2l26 2v27l-26 2z" fill="#9fd0ee" stroke="#5fa3cf"/><path d="M5 3l26 1.500v26L5 32z" fill="#b9e0f6" stroke="#6db0d9"/><path d="M2 2.500l27 1.500v26l-27 2z" fill="#8fc9ec" stroke="#5a9cc8"/>
  <circle cx="16" cy="17" r="11" fill="#f28a1c" stroke="#fff" stroke-width="1.200"/><path d="M12.500 10.500l10 6.500-10 6.500z" fill="#fff"/>
 </svg>
 <!-- Ya -->
 <div class="abs" style="left:295px;top:3.500px;width:40px;height:40px;border-radius:50%;background:#fc3f1d;overflow:hidden"><span class="abs" style="left:0;top:0;width:40px;height:40px;color:#fff;font:bold 34px/41px 'Liberation Sans',sans-serif;text-align:center;transform:scaleX(.66)">Я</span></div>
 <!-- market -->
 <svg class="abs" style="left:365px;top:3px" width="41" height="41" viewBox="0 0 41 41"><circle cx="20.300" cy="20.500" r="20" fill="#ffd426"/><path d="M6.500 27.500c2.500-4 4.500-8.500 7-12 1.500 3.500 1 9.500 2.800 13 4-5 7.500-12.500 11.700-17 1.800 3.500 1 9.500 3 12.500 2.200-.5 4-2.500 5.500-4.500" fill="none" stroke="#141414" stroke-width="7" stroke-linejoin="round" stroke-linecap="butt"/></svg>
 <!-- yandex browser button -->
 <div class="tbi" style="left:426px;width:61px;border:1px solid rgba(255,255,255,.5);background:rgba(255,255,255,.1)"></div>
 <div class="tbi" style="left:421px;width:60px;border:1px solid #fff3c8;background:linear-gradient(180deg,#f9eba8 0,#f6d680 30%,#efb850 55%,#e4983a 78%,#e8a040 100%);box-shadow:0 0 0 1px rgba(90,60,20,.6)"></div>
 <svg class="abs" style="left:431px;top:4px" width="40" height="40" viewBox="0 0 40 40"><circle cx="20" cy="20" r="19.500" fill="#fdfdfd" stroke="#d8d8d8"/><path d="M8.500 11l11.500 11 11.500-11M20 21.500v13" stroke="#e3121a" stroke-width="4" fill="none" stroke-linecap="round"/></svg>
 <!-- mahjong -->
 <svg class="abs" style="left:509px;top:3px" width="32" height="42" viewBox="0 0 32 42"><path d="M4 6l4-4h20v34l-4 4H4z" fill="#d9c48f" stroke="#a99562"/><rect x="4" y="6" width="20" height="34" rx="2" fill="#f6efd9" stroke="#c9b98a"/><path d="M9 15l9-4M8 19l12-4" stroke="#2a56d8" stroke-width="2.200" stroke-linecap="round"/><path d="M9 25h10l-4 3c4 0 4 5 0 6-3 .5-4-2-2-3" stroke="#d8261c" stroke-width="2" fill="none" stroke-linecap="round"/></svg>
 <!-- grey disk -->
 <svg class="abs" style="left:575px;top:3px" width="42" height="42" viewBox="0 0 42 42"><defs><radialGradient id="dsk" cx="38%" cy="35%" r="70%"><stop offset="0" stop-color="#d6d6d6"/><stop offset=".45" stop-color="#a9a9a9"/><stop offset=".8" stop-color="#7b7b7b"/><stop offset="1" stop-color="#555"/></radialGradient></defs><ellipse cx="21" cy="22" rx="16.500" ry="19" fill="url(#dsk)" transform="rotate(22 21 22)"/><ellipse cx="19" cy="20" rx="11.500" ry="14" fill="none" stroke="#6e6e6e" stroke-width="1.800" transform="rotate(22 19 20)"/><ellipse cx="18" cy="19" rx="8" ry="10.500" fill="#b4b4b4" stroke="#8a8a8a" transform="rotate(22 18 19)"/><ellipse cx="16.500" cy="17" rx="4" ry="6" fill="#c9c9c9" transform="rotate(22 16.500 17)"/></svg>
 <!-- money -->
 <svg class="abs" style="left:645px;top:3px" width="42" height="42" viewBox="0 0 42 42"><g transform="rotate(-50 21 21)"><rect x="4" y="14" width="33" height="15" fill="#18b98a" stroke="#0a6a5a" stroke-width="1.500"/><rect x="6" y="10.500" width="33" height="15" fill="#3ad16a" stroke="#0a7a6a" stroke-width="1.800"/><rect x="9" y="13" width="27" height="10" fill="none" stroke="#16a86a" stroke-width="1"/><circle cx="22.500" cy="18" r="4" fill="#20a860" stroke="#0b6b52"/></g><g fill="#f1e32c" stroke="#222" stroke-width="1"><circle cx="4.500" cy="11" r="3.500"/><circle cx="9.500" cy="4" r="3" fill="#ddd"/><circle cx="30" cy="36" r="4"/><circle cx="37" cy="35" r="4" fill="#ddd"/><circle cx="13" cy="38" r="3" fill="#ddd"/><circle cx="35" cy="25" r="2.500" fill="#ddd"/></g></svg>
 <!-- computer -->
 <svg class="abs" style="left:716px;top:5px" width="40" height="38" viewBox="0 0 40 38"><path d="M8 5l24-4v20l-24 5z" fill="#3a3f47" stroke="#22262c"/><path d="M10 7l20-3.500v16l-20 4z" fill="#2aa0c8"/><path d="M10 7l20-3.500v6c-8 1-14 5-20 11z" fill="#7fd0e8" opacity=".6"/><path d="M17 25l6-1v4l-6 1z" fill="#555"/><path d="M11 30l14-4 5 2-14 5z" fill="#b5b8bd" stroke="#777"/><path d="M2 31l9-3 6 4-9 4z" fill="#c9cbd0" stroke="#777"/><path d="M22 35l12-4 2 1.500-12 4z" fill="#cfd1d6" stroke="#888"/></svg>
 <!-- active spectralab button -->
 <div class="tbi" style="left:772px;width:67px;border:1px solid rgba(255,255,255,.9);background:linear-gradient(180deg,rgba(255,255,255,.62),rgba(255,255,255,.42) 50%,rgba(255,255,255,.28) 52%,rgba(255,255,255,.5));box-shadow:0 0 0 1px rgba(40,60,90,.55)"></div>
 <svg class="abs" style="left:785px;top:5px;stroke-width:1.5" width="41" height="39" viewBox="0 0 20 20" preserveAspectRatio="none"><use href="#appicon"/></svg>
 <!-- tray -->
 <span class="tray" style="left:982.500px;top:14px;font-size:13.800px;line-height:18px;color:#e9eff6">RU</span>
 <svg class="abs" style="left:1020px;top:10px" width="150" height="32" viewBox="0 0 150 32">
  <path d="M4 17.500h10l-5-5.500z" fill="#fff" stroke="rgba(0,0,0,.3)" stroke-width=".5"/>
  <g fill="#fff" stroke="#2a3340" stroke-width=".7"><rect x="32.300" y="5.300" width="2.500" height="19"/><path d="M35.200 6.800c3.500-1.500 5.500-.5 7 1.500 1 1.800 3.500 2.500 8.200 1.800-1 2.800-2.500 5.200-4.800 6.200-2.500.8-4.500-.2-6.200-1-1.500-.6-3-.4-4.200.2z"/></g>
  <g fill="none" stroke="#fff" stroke-width="1.500"><rect x="62.300" y="7.500" width="9.400" height="16.200" rx="1.500"/><path d="M65 6.300h4"/></g><rect x="64.200" y="9.500" width="5.600" height="10.500" fill="#5d7590"/>
  <g fill="#fff" stroke="#2a3340" stroke-width=".6"><rect x="74.300" y="6.600" width="1.500" height="4"/><rect x="77.800" y="6.600" width="1.500" height="4"/><path d="M72.800 10.400h8v3.200c0 1.500-1.200 2.600-2.700 2.800v8h-2.600v-8c-1.500-.2-2.700-1.300-2.700-2.800z"/></g>
  <g fill="#fff" stroke="#2a3340" stroke-width=".5"><rect x="93.300" y="17.300" width="2.400" height="4.400"/><rect x="96.400" y="15.200" width="2.400" height="6.500"/><rect x="99.500" y="13" width="2.400" height="8.700"/><rect x="102.600" y="10.700" width="2.400" height="11"/><rect x="105.700" y="8.700" width="2.400" height="13"/></g>
  <g fill="#fff" stroke="#2a3340" stroke-width=".7"><path d="M121.500 11.500h2.200l5.200-6v19l-5.200-6h-2.200z"/></g><g fill="none" stroke="#fff" stroke-linecap="round"><path d="M131 13c.8 1.200.8 2.800 0 4" stroke-width="1.300"/><path d="M134 10.500c1.800 2.800 1.800 6.200 0 9" stroke-width="1.300" stroke-opacity=".8"/><path d="M137 8.500c2.600 4 2.600 9 0 13" stroke-width="1.300" stroke-opacity=".9"/></g>
 </svg>
 <span class="tray" style="left:1182px;top:5.500px;width:70px;text-align:center;font-size:14.200px;line-height:18px">18:51</span>
 <span class="tray" style="left:1172px;top:27.500px;width:90px;text-align:center;font-size:14.200px;line-height:18px">23.06.2024</span>
 <div class="abs" style="left:1267px;top:1px;width:13px;height:47px;border-left:1px solid rgba(255,255,255,.45);background:linear-gradient(180deg,rgba(255,255,255,.35),rgba(255,255,255,.1) 45%,rgba(0,0,0,.15) 50%,rgba(255,255,255,.1));box-shadow:-1px 0 0 rgba(30,40,60,.6)"></div>
</div>
</body>
</html>
